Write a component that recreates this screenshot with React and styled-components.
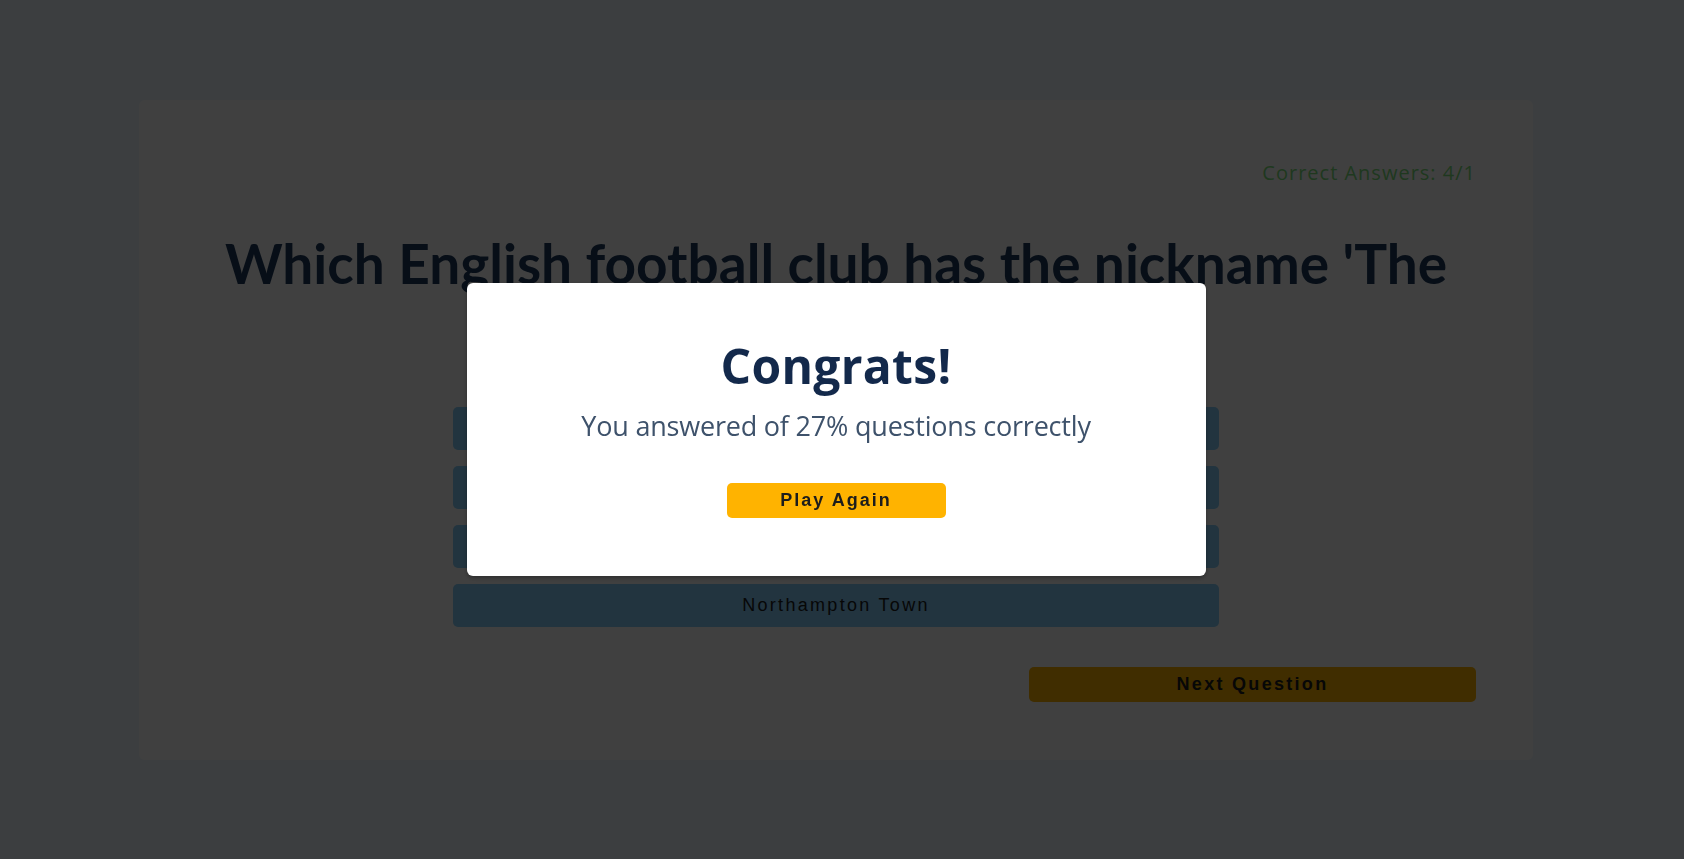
import React from "react";
import styled, { createGlobalStyle } from "styled-components";

const answers = ["Bristol Rovers", "Wycombe Wanderers", "Reading", "Northampton Town"];

const App = () => {
  return (
    <>
      <GlobalStyle />
      <Page>
        <Card>
          <Score>Correct Answers: 4/1</Score>
          <Question>Which English football club has the nickname 'The Cobblers'?</Question>
          <AnswerList>
            {answers.map((a) => (
              <AnswerButton key={a}>{a}</AnswerButton>
            ))}
          </AnswerList>
          <NextButton>Next Question</NextButton>
        </Card>
      </Page>
      <Overlay>
        <Modal>
          <Title>Congrats!</Title>
          <Subtitle>You answered of 27% questions correctly</Subtitle>
          <PlayButton>Play Again</PlayButton>
        </Modal>
      </Overlay>
    </>
  );
};

const GlobalStyle = createGlobalStyle`
  body {
    margin: 0;
    background: #f0f8ff;
    font-family: 'Open Sans', 'Noto Sans', sans-serif;
  }
`;

const Page = styled.div`
  min-height: 100vh;
  box-sizing: border-box;
  padding: 100px 12px 0 0;
`;

const Card = styled.div`
  width: 1394px;
  margin: 0 auto;
  box-sizing: border-box;
  padding: 59px 57px 58px;
  background: #fff;
  border-radius: 6px;
  display: flex;
  flex-direction: column;
`;

const Score = styled.p`
  align-self: flex-end;
  margin: 0;
  font-size: 20px;
  line-height: 27px;
  letter-spacing: 1px;
  color: #7de07d;
`;

const Question = styled.h2`
  margin: 44px 0 45px;
  font-family: Lato, 'Open Sans', sans-serif;
  font-size: 55px;
  line-height: 1.2;
  font-weight: 700;
  text-align: center;
  color: #1e3a5c;
`;

const AnswerList = styled.div`
  align-self: center;
  width: 766px;
  display: flex;
  flex-direction: column;
  gap: 16px;
`;

const AnswerButton = styled.button`
  height: 43px;
  border: none;
  border-radius: 5px;
  background: #87cefa;
  color: #1c1c1c;
  font-family: 'Liberation Sans', Arial, sans-serif;
  font-size: 18px;
  letter-spacing: 2.3px;
  cursor: pointer;
`;

const NextButton = styled.button`
  align-self: flex-end;
  width: 447px;
  height: 35px;
  margin-top: 40px;
  border: none;
  border-radius: 5px;
  background: #ffb300;
  color: #1c1c1c;
  font-family: 'Liberation Sans', Arial, sans-serif;
  font-size: 18px;
  font-weight: 700;
  letter-spacing: 2.3px;
  cursor: pointer;
`;

const Overlay = styled.div`
  position: fixed;
  inset: 0;
  box-sizing: border-box;
  padding-right: 12px;
  background: rgba(0, 0, 0, 0.75);
  display: flex;
  align-items: center;
  justify-content: center;
`;

const Modal = styled.div`
  width: 739px;
  box-sizing: border-box;
  padding: 54px 0 58px;
  background: #fff;
  border-radius: 6px;
  box-shadow: 0 2px 4px rgba(0, 0, 0, 0.3);
  display: flex;
  flex-direction: column;
  align-items: center;
`;

const Title = styled.h1`
  margin: 0;
  font-size: 48px;
  line-height: 1.2;
  font-weight: 700;
  letter-spacing: 0.3px;
  color: #13294b;
`;

const Subtitle = styled.p`
  margin: 15px 0 41px;
  font-size: 27px;
  line-height: 1.2;
  letter-spacing: -0.2px;
  color: #3e526b;
`;

const PlayButton = styled.button`
  width: 219px;
  height: 35px;
  border: none;
  border-radius: 5px;
  background: #ffb300;
  color: #1c1c1c;
  font-family: 'Liberation Sans', Arial, sans-serif;
  font-size: 18px;
  font-weight: 700;
  letter-spacing: 2px;
  cursor: pointer;
`;

export default App;
